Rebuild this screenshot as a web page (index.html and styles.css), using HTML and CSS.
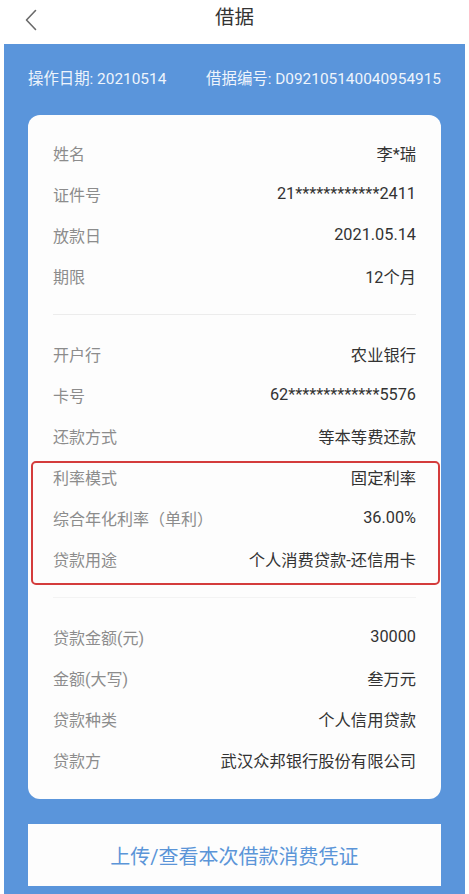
FILE: index.html
```html
<!DOCTYPE html>
<html lang="zh-CN">
<head>
<meta charset="utf-8">
<title>借据</title>
<link rel="stylesheet" href="styles.css">
</head>
<body>
<header class="topbar">
  <div class="back">
    <svg width="14" height="22" viewBox="0 0 14 22"><path d="M11.5 1.5 L2.5 11 L11.5 20.5" fill="none" stroke="#6a6a6a" stroke-width="1.6" stroke-linecap="round" stroke-linejoin="round"/></svg>
  </div>
  <h1 class="title">借据</h1>
  <div></div>
</header>
<main class="panel">
  <div class="info">
    <span>操作日期: 20210514</span>
    <span>借据编号: D092105140040954915</span>
  </div>
  <section class="card">
    <div class="row"><span class="label">姓名</span><span class="value">李*瑞</span></div>
    <div class="row"><span class="label">证件号</span><span class="value">21************2411</span></div>
    <div class="row"><span class="label">放款日</span><span class="value">2021.05.14</span></div>
    <div class="row"><span class="label">期限</span><span class="value">12个月</span></div>
    <div class="divider"></div>
    <div class="row"><span class="label">开户行</span><span class="value">农业银行</span></div>
    <div class="row"><span class="label">卡号</span><span class="value">62*************5576</span></div>
    <div class="row"><span class="label">还款方式</span><span class="value">等本等费还款</span></div>
    <div class="highlight">
      <div class="row"><span class="label">利率模式</span><span class="value">固定利率</span></div>
      <div class="row"><span class="label">综合年化利率（单利）</span><span class="value">36.00%</span></div>
      <div class="row"><span class="label">贷款用途</span><span class="value">个人消费贷款-还信用卡</span></div>
    </div>
    <div class="divider faint"></div>
    <div class="row"><span class="label">贷款金额(元)</span><span class="value">30000</span></div>
    <div class="row"><span class="label">金额(大写)</span><span class="value">叁万元</span></div>
    <div class="row"><span class="label">贷款种类</span><span class="value">个人信用贷款</span></div>
    <div class="row"><span class="label">贷款方</span><span class="value">武汉众邦银行股份有限公司</span></div>
  </section>
  <div class="action">上传/查看本次借款消费凭证</div>
</main>
</body>
</html>
```
FILE: styles.css
```css
* { box-sizing: border-box; }
html, body { margin: 0; padding: 0; }
body {
  width: 469px;
  height: 894px;
  overflow: hidden;
  background: #ffffff;
  font-family: "Roboto", "Noto Sans CJK SC", "Noto Sans", sans-serif;
  color: #333;
}
.topbar {
  height: 44px;
  display: grid;
  grid-template-columns: 1fr auto 1fr;
  align-items: center;
}
.back {
  padding-left: 24px;
  display: flex;
  align-items: center;
  padding-bottom: 4px;
}
.title {
  margin: 0;
  font-size: 19.5px;
  font-weight: 400;
  color: #333;
  line-height: 24px;
  padding-bottom: 8px;
}
.panel {
  margin: 0 4px;
  height: 850px;
  background: #5a95db;
  padding-top: 25px;
}
.info {
  display: flex;
  justify-content: space-between;
  padding: 0 24px;
  font-size: 15.4px;
  line-height: 20px;
  color: #eef4fc;
}
.card {
  margin: 26px 24px 0;
  background: #fdfdfd;
  border-radius: 12px;
  padding: 17px 25px 19px;
}
.row {
  height: 41px;
  display: flex;
  justify-content: space-between;
  align-items: center;
}
.label {
  font-size: 16px;
  color: #8c8c8c;
}
.value {
  font-size: 16.3px;
  color: #333;
}
.divider {
  height: 1px;
  background: #ececec;
  margin: 18px 0;
}
.divider.faint { background: #f3f3f3; }
.highlight {
  position: relative;
}
.highlight::after {
  content: "";
  position: absolute;
  top: 5px;
  bottom: -6px;
  left: -22px;
  right: -24px;
  border: 2px solid #d43c3c;
  border-radius: 5px;
  pointer-events: none;
}
.action {
  margin: 25px 24px 0;
  height: 62px;
  background: #fdfdfd;
  display: flex;
  align-items: center;
  justify-content: center;
  font-size: 20px;
  color: #5b95d8;
}
```
